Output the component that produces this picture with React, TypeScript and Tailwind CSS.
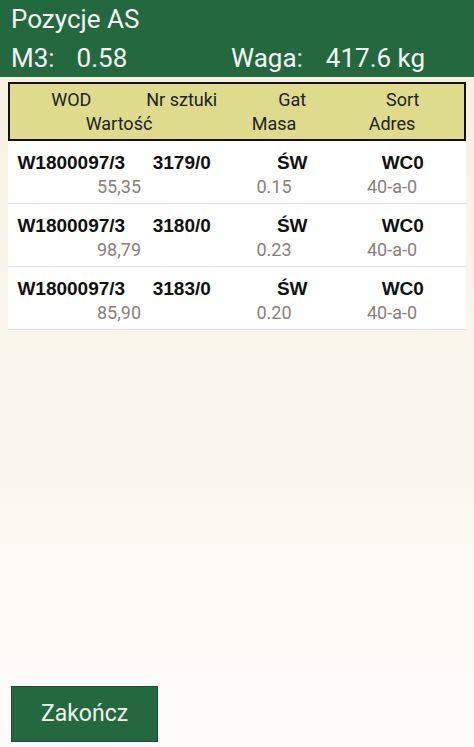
import React from "react";

const rows = [
  { wod: "W1800097/3", nr: "3179/0", gat: "ŚW", sort: "WC0", wart: "55,35", masa: "0.15", adres: "40-a-0" },
  { wod: "W1800097/3", nr: "3180/0", gat: "ŚW", sort: "WC0", wart: "98,79", masa: "0.23", adres: "40-a-0" },
  { wod: "W1800097/3", nr: "3183/0", gat: "ŚW", sort: "WC0", wart: "85,90", masa: "0.20", adres: "40-a-0" },
];

export default function App() {
  return (
    <div
      className="min-h-[747px] h-[747px] flex flex-col bg-gradient-to-b from-[#f7efdf] to-[#fefcfa] overflow-hidden"
      style={{ fontFamily: "Roboto, 'Noto Sans', sans-serif" }}
    >
      <div className="bg-[#23683f] text-[#f4f8f2] h-[77px] pl-[11px] pt-[4px] text-[26px]">
        <div className="leading-[30px]">Pozycje AS</div>
        <div className="leading-[36px] mt-[6px] flex">
          <div className="w-[220px] flex">
            <span>M3:</span>
            <span className="ml-[22px]">0.58</span>
          </div>
          <div className="flex">
            <span>Waga:</span>
            <span className="ml-[23px]">417.6 kg</span>
          </div>
        </div>
      </div>

      <div className="mx-[8px] mt-[5px]">
        <div className="border-2 border-[#111] bg-[#dedb8c] px-[6px] pt-[4px] pb-[3px] text-[18px] leading-[24px] text-[#222]">
          <div className="grid grid-cols-4 text-center">
            <div>WOD</div>
            <div>Nr sztuki</div>
            <div>Gat</div>
            <div>Sort</div>
          </div>
          <div className="grid grid-cols-[206px_104px_132px] text-center">
            <div>Wartość</div>
            <div>Masa</div>
            <div>Adres</div>
          </div>
        </div>
        {rows.map((r, i) => (
          <div key={i} className="bg-white border-b border-[#e3e1de] px-[8px] pt-[10px] h-[63px]">
            <div
              className="grid grid-cols-4 text-center text-[19px] leading-[24px] font-bold text-[#111]"
              style={{ fontFamily: "'Liberation Sans', Arial, sans-serif" }}
            >
              <div>{r.wod}</div>
              <div>{r.nr}</div>
              <div>{r.gat}</div>
              <div>{r.sort}</div>
            </div>
            <div className="grid grid-cols-[206px_104px_132px] text-center text-[18px] leading-[24px] text-[#8a807b]">
              <div>{r.wart}</div>
              <div>{r.masa}</div>
              <div>{r.adres}</div>
            </div>
          </div>
        ))}
      </div>

      <div className="mt-auto mb-[5px] ml-[11px]">
        <button className="w-[147px] h-[56px] bg-[#23683f] border border-[#1b4f30] text-[#eef5ee] text-[23px]">
          Zakończ
        </button>
      </div>
    </div>
  );
}
